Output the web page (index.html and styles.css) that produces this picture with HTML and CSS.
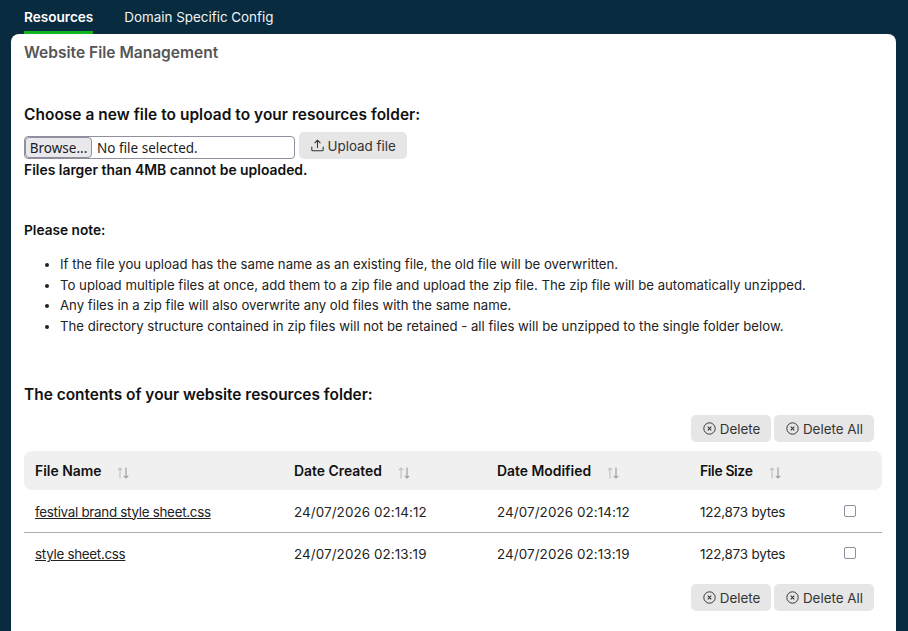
FILE: index.html
```html
<!DOCTYPE html>
<html lang="en">
<head>
<meta charset="utf-8">
<title>Website File Management</title>
<link rel="stylesheet" href="styles.css">
</head>
<body>
<nav class="tabs">
  <a class="tab active">Resources</a>
  <a class="tab">Domain Specific Config</a>
</nav>
<main class="card">
  <h1 class="title">Website File Management</h1>
  <h2 class="heading upload-heading">Choose a new file to upload to your resources folder:</h2>
  <div class="upload-row">
    <div class="file-input"><span class="browse">Browse...</span><span class="file-label">No file selected.</span></div>
    <button class="btn upload-btn"><svg class="icon" viewBox="0 0 16 16" width="13" height="13"><path d="M8 10.5V1.5M4.8 4.7L8 1.5l3.2 3.2M1 10v3.2c0 .8.6 1.3 1.3 1.3h11.4c.7 0 1.3-.5 1.3-1.3V10" fill="none" stroke="currentColor" stroke-width="1.3" stroke-linecap="round" stroke-linejoin="round"/></svg>Upload file</button>
  </div>
  <p class="limit">Files larger than 4MB cannot be uploaded.</p>
  <p class="note-title">Please note:</p>
  <ul class="notes">
    <li>If the file you upload has the same name as an existing file, the old file will be overwritten.</li>
    <li>To upload multiple files at once, add them to a zip file and upload the zip file. The zip file will be automatically unzipped.</li>
    <li>Any files in a zip file will also overwrite any old files with the same name.</li>
    <li>The directory structure contained in zip files will not be retained - all files will be unzipped to the single folder below.</li>
  </ul>
  <h2 class="heading contents-heading">The contents of your website resources folder:</h2>
  <div class="actions actions-top">
    <button class="btn"><svg class="icon" viewBox="0 0 16 16" width="13" height="13"><circle cx="8" cy="8" r="7" fill="none" stroke="currentColor" stroke-width="1.2"/><path d="M5.8 5.8l4.4 4.4M10.2 5.8l-4.4 4.4" stroke="currentColor" stroke-width="1.3"/></svg>Delete</button>
    <button class="btn"><svg class="icon" viewBox="0 0 16 16" width="13" height="13"><circle cx="8" cy="8" r="7" fill="none" stroke="currentColor" stroke-width="1.2"/><path d="M5.8 5.8l4.4 4.4M10.2 5.8l-4.4 4.4" stroke="currentColor" stroke-width="1.3"/></svg>Delete All</button>
  </div>
  <table class="files">
    <thead>
      <tr>
        <th class="col-name">File Name<svg class="sort" viewBox="0 0 12 12" width="12" height="12"><path class="up" d="M3 11.5V1M.8 3.2L3 1l2.2 2.2"/><path class="down" d="M9 .5V11M6.8 8.8L9 11l2.2-2.2"/></svg></th>
        <th class="col-created">Date Created<svg class="sort" viewBox="0 0 12 12" width="12" height="12"><path class="up" d="M3 11.5V1M.8 3.2L3 1l2.2 2.2"/><path class="down" d="M9 .5V11M6.8 8.8L9 11l2.2-2.2"/></svg></th>
        <th class="col-modified">Date Modified<svg class="sort" viewBox="0 0 12 12" width="12" height="12"><path class="up" d="M3 11.5V1M.8 3.2L3 1l2.2 2.2"/><path class="down" d="M9 .5V11M6.8 8.8L9 11l2.2-2.2"/></svg></th>
        <th class="col-size">File Size<svg class="sort" viewBox="0 0 12 12" width="12" height="12"><path class="up" d="M3 11.5V1M.8 3.2L3 1l2.2 2.2"/><path class="down" d="M9 .5V11M6.8 8.8L9 11l2.2-2.2"/></svg></th>
        <th class="col-check"></th>
      </tr>
    </thead>
    <tbody>
      <tr>
        <td><a class="file-link">festival brand style sheet.css</a></td>
        <td class="date">24/07/2026 02:14:12</td>
        <td class="date">24/07/2026 02:14:12</td>
        <td class="size">122,873 bytes</td>
        <td class="check-cell"><span class="check"></span></td>
      </tr>
      <tr>
        <td><a class="file-link">style sheet.css</a></td>
        <td class="date">24/07/2026 02:13:19</td>
        <td class="date">24/07/2026 02:13:19</td>
        <td class="size">122,873 bytes</td>
        <td class="check-cell"><span class="check"></span></td>
      </tr>
    </tbody>
  </table>
  <div class="actions actions-bottom">
    <button class="btn"><svg class="icon" viewBox="0 0 16 16" width="13" height="13"><circle cx="8" cy="8" r="7" fill="none" stroke="currentColor" stroke-width="1.2"/><path d="M5.8 5.8l4.4 4.4M10.2 5.8l-4.4 4.4" stroke="currentColor" stroke-width="1.3"/></svg>Delete</button>
    <button class="btn"><svg class="icon" viewBox="0 0 16 16" width="13" height="13"><circle cx="8" cy="8" r="7" fill="none" stroke="currentColor" stroke-width="1.2"/><path d="M5.8 5.8l4.4 4.4M10.2 5.8l-4.4 4.4" stroke="currentColor" stroke-width="1.3"/></svg>Delete All</button>
  </div>
</main>
</body>
</html>
```
FILE: styles.css
```css
* { box-sizing: border-box; }
html, body { height: 100%; overflow: hidden; }
body {
  margin: 0;
  background: #082b40;
  font-family: "Inter", "Liberation Sans", sans-serif;
  font-size: 13.4px;
  color: #1b1b1b;
  padding: 0 12px 0 11px;
}
.tabs { display: flex; gap: 31px; height: 34px; padding-left: 13px; }
.tab {
  color: #f2f4f5;
  font-size: 13.4px;
  line-height: 34px;
  height: 34px;
  border-bottom: 3px solid transparent;
}
.tab.active { font-size: 13.6px; font-weight: 600; color: #fff; border-bottom-color: #12b31c; }
.card {
  background: #fff;
  border-radius: 8px 8px 0 0;
  padding: 9px 13px 0;
  height: 597px;
}
.title { margin: 0; font-size: 15.55px; line-height: 20px; font-weight: 600; color: #555; }
.heading { margin: 0; font-size: 15.45px; line-height: 20px; font-weight: 600; color: #111; }
.upload-heading { margin-top: 42px; letter-spacing: 0.05px; }
.upload-row { display: flex; align-items: flex-start; gap: 4px; margin-top: 7px; }
.file-input {
  width: 271px;
  height: 23px;
  margin-top: 4px;
  border: 1px solid #8f8f9d;
  border-radius: 4px;
  display: flex;
  align-items: stretch;
  font-family: "Noto Sans", sans-serif;
  font-size: 13.5px;
}
.browse {
  width: 67px;
  background: #e9e9ed;
  border: 1px solid #8f8f9d;
  border-radius: 4px;
  display: flex;
  align-items: center;
  justify-content: center;
}
.file-label { padding-left: 5px; line-height: 22px; }
.btn {
  display: inline-flex;
  align-items: center;
  gap: 4px;
  height: 27px;
  padding: 0 11px 0 11.5px;
  background: #e6e6e6;
  border: 0;
  border-radius: 5px;
  font: inherit;
  font-size: 13.4px;
  color: #333;
}
.limit { margin: 2px 0 0; font-size: 13.9px; line-height: 18px; font-weight: 600; color: #111; }
.note-title { margin: 42px 0 0; font-size: 13.7px; line-height: 18px; font-weight: 600; color: #111; }
.notes { margin: 15px 0 0; padding-left: 36px; font-size: 13.2px; line-height: 20.5px; color: #222; }
.contents-heading { margin-top: 49px; }
.actions { display: flex; justify-content: flex-end; gap: 3px; padding-right: 9px; }
.actions-top { margin-top: 10px; }
.actions-bottom { margin-top: 9px; }
.files { width: 858px; border-collapse: separate; border-spacing: 0; margin-top: 9px; table-layout: fixed; }
.files th {
  background: #f0f0f0;
  height: 39px;
  text-align: left;
  font-weight: 600;
  font-size: 13.9px;
  padding: 0 0 0 11px;
  color: #111;
}
.files th:first-child { border-radius: 8px 0 0 8px; }
.files th:last-child { border-radius: 0 8px 8px 0; }
.col-name { width: 259px; }
.col-created { width: 203px; }
.col-modified { width: 203px; }
.col-size { width: 133px; }
.files th.col-size { letter-spacing: -0.35px; }
.sort { margin-left: 16px; vertical-align: -3px; fill: none; stroke-width: 1.2; }
.sort .up { stroke: #c4c4c4; }
.sort .down { stroke: #a0a0a0; }
.files td { height: 42px; padding: 0 0 0 11px; font-size: 13.4px; color: #222; }
.files td.date { letter-spacing: 0.1px; }
.files td.size { letter-spacing: -0.2px; }
.files tbody tr:first-child td { height: 43px; padding-top: 1px; border-bottom: 1px solid #aaa; }
.file-link { text-decoration: underline; letter-spacing: -0.29px; }
.files td.check-cell { padding-left: 0; }
.check { display: block; width: 12px; height: 12px; margin: -2px 0 0 22px; border: 1px solid #8f8f9d; border-radius: 2px; }
```
